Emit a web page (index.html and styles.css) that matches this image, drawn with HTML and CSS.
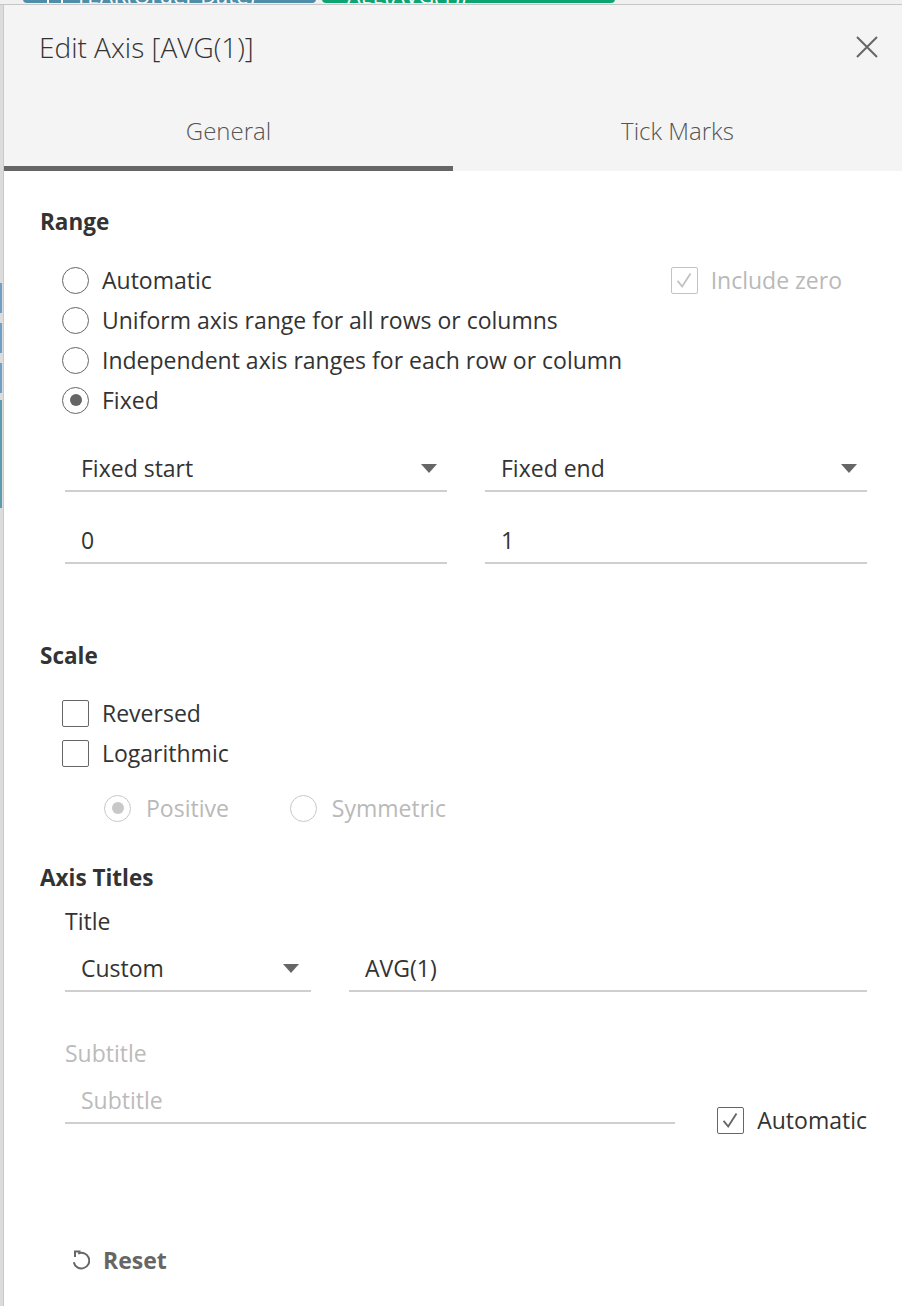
FILE: index.html
```html
<!DOCTYPE html>
<html>
<head>
<meta charset="utf-8">
<link rel="stylesheet" href="styles.css">
</head>
<body>
<div class="app">
  <div class="topbar">
    <div class="pill pill-blue"><span class="pill-ico"></span>YEAR(Order Date)</div>
    <div class="pill pill-green">Agg(AVG(1))</div>
  </div>
  <div class="leftstrip">
    <i class="lb lb1"></i><i class="lb lb2"></i><i class="lb lb3"></i><i class="lb lb4"></i>
  </div>
  <div class="dialog">
    <div class="dlg-head">
      <div class="dlg-title">Edit Axis [AVG(1)]</div>
      <svg class="close" width="22" height="22" viewBox="0 0 22 22"><path d="M1 1 L21 21 M21 1 L1 21" stroke="#666" stroke-width="2" fill="none"/></svg>
    </div>
    <div class="tabs">
      <div class="tab active">General</div>
      <div class="tab">Tick Marks</div>
    </div>
    <div class="body">
      <div class="heading">Range</div>
      <div class="opts">
        <div class="row between">
          <label class="opt"><span class="radio"></span>Automatic</label>
          <label class="opt disabled incl"><span class="check checked"><svg viewBox="0 0 27 27"><path d="M6 14 L11 20 L20 6" fill="none" stroke="currentColor" stroke-width="2"/></svg></span>Include zero</label>
        </div>
        <label class="opt row"><span class="radio"></span>Uniform axis range for all rows or columns</label>
        <label class="opt row"><span class="radio"></span>Independent axis ranges for each row or column</label>
        <label class="opt row"><span class="radio on"></span>Fixed</label>
      </div>
      <div class="fields">
        <div class="field select"><span>Fixed start</span><i class="caret"></i></div>
        <div class="field select"><span>Fixed end</span><i class="caret"></i></div>
        <div class="field"><span>0</span></div>
        <div class="field"><span>1</span></div>
      </div>

      <div class="heading h-scale">Scale</div>
      <div class="opts opts-scale">
        <label class="opt row"><span class="check"></span>Reversed</label>
        <label class="opt row"><span class="check"></span>Logarithmic</label>
        <div class="subopts">
          <label class="opt disabled"><span class="radio on"></span>Positive</label>
          <label class="opt disabled"><span class="radio"></span>Symmetric</label>
        </div>
      </div>

      <div class="heading h-axis">Axis Titles</div>
      <div class="indent">
        <div class="label">Title</div>
        <div class="title-row">
          <div class="field select sel-custom"><span>Custom</span><i class="caret"></i></div>
          <div class="field"><span>AVG(1)</span></div>
        </div>
        <div class="label muted sub-label">Subtitle</div>
        <div class="sub-row">
          <div class="field sub-field"><span class="ph">Subtitle</span></div>
          <label class="opt auto"><span class="check checked"><svg viewBox="0 0 27 27"><path d="M6 14 L11 20 L20 6" fill="none" stroke="currentColor" stroke-width="2"/></svg></span>Automatic</label>
        </div>
      </div>

      <div class="reset">
        <svg class="reset-ico" width="18" height="22" viewBox="0 0 18 22"><path d="M6.1 4.6 A7.8 7.8 0 1 1 1.8 13.2" fill="none" stroke="#666" stroke-width="2"/><path d="M8.5 2.5 H3 V8" fill="none" stroke="#666" stroke-width="2"/></svg>
        <span>Reset</span>
      </div>
    </div>
  </div>
</div>
</body>
</html>
```

FILE: styles.css
```css
* { box-sizing: border-box; }
html, body { margin: 0; padding: 0; }
body {
  width: 902px;
  height: 1306px;
  overflow: hidden;
  background: #e4e4e4;
  font-family: "Open Sans", "Liberation Sans", sans-serif;
  color: #333;
}
.app {
  display: grid;
  grid-template-columns: 3px 1fr;
  grid-template-rows: 5px 1fr;
  height: 1306px;
}
.topbar {
  grid-column: 1 / 3;
  display: flex;
  align-items: flex-end;
  gap: 6px;
  padding-left: 23px;
  padding-bottom: 1px;
  overflow: hidden;
  background: #f0f0f0;
  border-bottom: 1px solid #c6c6c6;
}
.pill {
  flex: 0 0 293px;
  height: 30px;
  border-radius: 0 0 4px 4px;
  color: #fff;
  font-size: 22px;
  line-height: 44px;
  padding-left: 24px;
  white-space: nowrap;
  overflow: hidden;
}
.pill-blue { background: #4e8ea8; }
.pill-green { background: #0ea472; padding-left: 25px; }
.pill-ico {
  display: inline-block;
  width: 16px;
  height: 18px;
  border: 2px solid #fff;
  margin-right: 12px;
  vertical-align: middle;
}
.leftstrip {
  display: flex;
  flex-direction: column;
  background: #dcdcdc;
  padding-top: 278px;
  padding-right: 1px;
}
.lb { display: block; margin-bottom: 10px; }
.lb1, .lb2, .lb3 { height: 30px; background: #6f9fc4; }
.lb3 { margin-bottom: 7px; }
.lb4 { height: 108px; background: #5d9cac; }

.dialog {
  background: #fff;
  border-left: 1px solid #c9c9c9;
  display: flex;
  flex-direction: column;
  min-width: 0;
}
.dlg-head {
  background: #f4f4f4;
  height: 84px;
  display: flex;
  align-items: center;
  justify-content: space-between;
  padding: 0 24px 0 35px;
}
.dlg-title {
  font-size: 28px;
  font-weight: 300;
  color: #333;
}
.close { display: block; }
.tabs {
  display: flex;
  background: #f4f4f4;
  height: 82px;
}
.tab {
  flex: 1;
  display: flex;
  align-items: center;
  justify-content: center;
  font-size: 24px;
  font-weight: 300;
  color: #555;
}
.tab.active { box-shadow: inset 0 -5px 0 #666; }

.body {
  flex: 1;
  padding: 36px 35px 0 36px;
}
.heading {
  font-size: 22.5px;
  font-weight: 700;
  line-height: 30px;
  color: #333;
}
.opts {
  margin-top: 23px;
  padding-left: 22px;
}
.row {
  height: 40px;
}
.between {
  display: flex;
  justify-content: space-between;
  align-items: center;
}
.opt {
  display: flex;
  align-items: center;
  gap: 13px;
  font-size: 23px;
  color: #333;
  white-space: nowrap;
}
.opt.disabled { color: #b9b9b9; }
.incl { margin-right: 25px; }
.radio {
  flex: 0 0 auto;
  width: 27px;
  height: 27px;
  border: 1.8px solid #666;
  border-radius: 50%;
  display: flex;
  align-items: center;
  justify-content: center;
}
.radio.on::after {
  content: "";
  width: 12px;
  height: 12px;
  border-radius: 50%;
  background: #666;
}
.disabled .radio { border-color: #c8c8c8; }
.disabled .radio.on::after { background: #c8c8c8; }
.check {
  flex: 0 0 auto;
  width: 27px;
  height: 27px;
  border: 1.8px solid #666;
  border-radius: 2px;
  color: #666;
  display: flex;
}
.check svg { width: 100%; height: 100%; }
.disabled .check { border-color: #c3c3c3; color: #c3c3c3; }

.fields {
  margin-top: 26px;
  padding-left: 25px;
  display: grid;
  grid-template-columns: 1fr 1fr;
  column-gap: 38px;
  row-gap: 26px;
}
.field {
  height: 46px;
  border-bottom: 2px solid #cfcfcf;
  display: flex;
  align-items: center;
  justify-content: space-between;
  padding: 0 10px 0 16px;
  font-size: 23px;
  color: #333;
  white-space: nowrap;
}
.caret {
  width: 0;
  height: 0;
  border-left: 8px solid transparent;
  border-right: 8px solid transparent;
  border-top: 9px solid #666;
}
.h-scale { margin-top: 77px; }
.opts-scale { margin-top: 22px; }
.subopts {
  margin-top: 15px;
  height: 40px;
  display: flex;
  align-items: center;
  gap: 61px;
  padding-left: 42px;
}
.subopts .opt { gap: 15px; }
.h-axis { margin-top: 35px; }
.indent { padding-left: 25px; }
.label {
  margin-top: 13px;
  font-size: 23px;
  line-height: 30px;
  color: #333;
}
.label.muted { color: #bbb; }
.title-row {
  margin-top: 10px;
  display: grid;
  grid-template-columns: 246px 1fr;
  column-gap: 38px;
}
.sel-custom { padding-right: 12px; }
.sub-label { margin-top: 46px; }
.sub-row {
  margin-top: 10px;
  display: flex;
  justify-content: space-between;
  align-items: flex-end;
}
.sub-field {
  width: 610px;
  margin-bottom: 16px;
}
.ph { color: #bbb; }
.auto { height: 40px; }

.reset {
  margin-top: 100px;
  height: 40px;
  display: flex;
  align-items: center;
  gap: 13px;
  padding-left: 32px;
  font-size: 23px;
  font-weight: 700;
  color: #666;
}
.reset-ico { display: block; }
```
